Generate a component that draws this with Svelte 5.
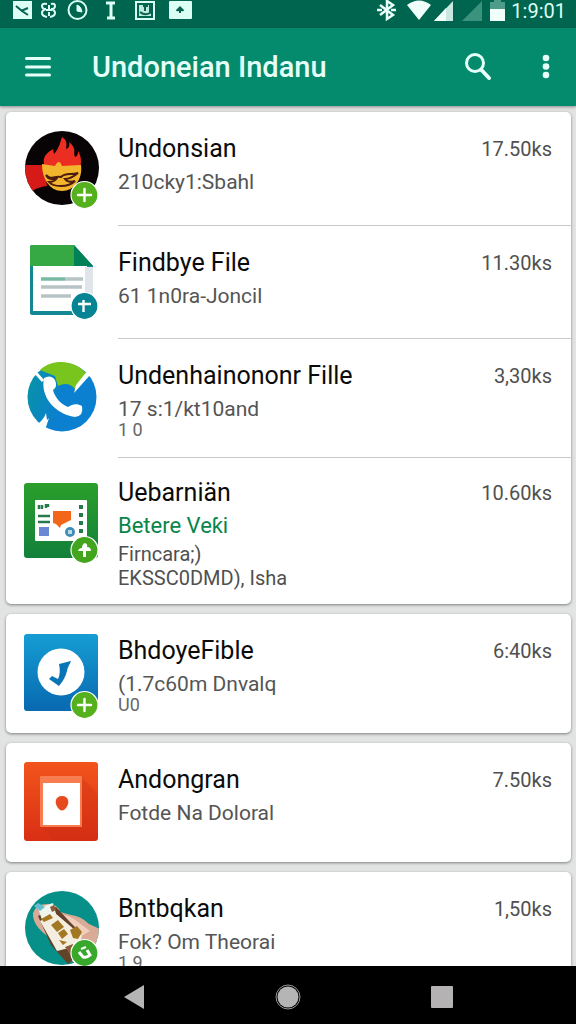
<script>
  const cards = [
    [
      { icon: 'flame', title: 'Undonsian', sub: '210cky1:Sbahl', size: '17.50ks' },
      { icon: 'doc', title: 'Findbye File', sub: '61 1n0ra-Joncil', size: '11.30ks' },
      { icon: 'phone', title: 'Undenhainononr Fille', sub: '17 s:1/kt10and', note: '1 0', size: '3,30ks' },
      { icon: 'board', title: 'Uebarniän', link: 'Betere Veƙi', lines: ['Firncara;)', 'EKSSC0DMD), Isha'], size: '10.60ks' }
    ],
    [{ icon: 'check', title: 'BhdoyeFible', sub: '(1.7c60m Dnvalq', note: 'U0', size: '6:40ks' }],
    [{ icon: 'frame', title: 'Andongran', sub: 'Fotde Na Doloral', size: '7.50ks' }],
    [{ icon: 'hand', title: 'Bntbqkan', sub: 'Fok? Om Theorai', note: '1 9', size: '1,50ks' }]
  ];
</script>

{#snippet badge(y, color, kind)}
  <circle cx="60.500" cy={y} r="13.500" fill={color} stroke="#fff" stroke-width="1.200" />
  {#if kind === 'plus'}
    <path d="M54 {y}h13M60.500 {y - 6}v12" stroke="#fff" stroke-width="2.400" stroke-linecap="round" />
  {:else if kind === 'cross'}
    <path d="M54 {y - 2}h13M59.500 {y - 6}v12" stroke="#fff" stroke-width="2.400" />
  {:else if kind === 'tree'}
    <path d="M54 {y + 1}q1-3 4-3q0-4 3-5q3 1 2 4q4 0 4 4h-5v6h-3v-6z" fill="#fff" />
  {:else}
    <path d="M55 {y - 1}l4 5q4 1 7-2l-3-5" fill="none" stroke="#fff" stroke-width="3" />
    <path d="M57 {y - 4}l5-2" stroke="#fff" stroke-width="2" />
  {/if}
{/snippet}

{#snippet appIcon(name)}
  <svg class="app-icon" viewBox="0 0 76 92" aria-hidden="true" fill="none">
    {#if name === 'flame'}
      <clipPath id="flame-clip"><circle cx="38" cy="40" r="37" /></clipPath>
      <g clip-path="url(#flame-clip)">
        <path d="M0 0h76v80H0z" fill="#080304" />
        <path d="M0 37h20l3 21q-10 1-18 7H0z" fill="#d61a18" />
        <path d="M20 37C18 27 25 24 29 21l1 5C36 19 36 14 38 9c5 3 5 7 4 12c3-1 4-4 3-7c8 6 4 10 6 15c3-1 3-4 3-6c5 8 2 13 3 18l-4 9H23z" fill="#ec2d22" />
        <path d="M18 36l13 2q4-8 7 0l19-1c2 14-7 26-19 26S18 51 18 36z" fill="#f3b52b" />
        <path d="M22 47c5 6 9 0 15 2c4-4 9-2 17-4c-6 5-9 6-13 6c3 4 7 3 10 2c-7 7-22 6-26 1c4 0 6-1 8-4c-5 2-9 1-11-3z" stroke="#4b1d10" stroke-width="2" />
      </g>
      {@render badge(67, '#55b01d', 'plus')}
    {:else if name === 'doc'}
      <path d="M8 4h42l19 21v46q0 3-3 3H8q-2 0-2-2V6q0-2 2-2z" fill="#118894" />
      <path d="M9 25h54v45H9z" fill="#fff" />
      <path d="M61 26h8v30h-8z" fill="#dfe5e9" />
      <path d="M8 4h42v21H6V6q0-2 2-2z" fill="#37a944" />
      <path d="M50 4l19 21H50z" fill="#008157" />
      <path d="M17 38h24" stroke="#78b9a3" stroke-width="3.500" />
      <path d="M41 38h18M17 46h41M17 55h30" stroke="#b8c3c6" stroke-width="3.500" />
      {@render badge(65, '#078493', 'cross')}
    {:else if name === 'phone'}
      <linearGradient id="phone-fill" x1="0" y1="0" x2="1" y2="0.300">
        <stop offset="0" stop-color="#0796a0" />
        <stop offset="0.600" stop-color="#0b7fd0" />
      </linearGradient>
      <circle cx="38" cy="43" r="34.500" fill="url(#phone-fill)" />
      <path d="M16 16C29 4 50 6 62 19L51 35q-7-8-17-3L31 22z" fill="#79c51d" />
      <path d="M11 18l8 9" stroke="#fff" stroke-width="3" />
      <path d="M64 16l3 4L50 39l2-8z" fill="#fff" />
      <path d="M20 24q7-4 11 2q3 7-2 10c2 8 8 14 15 17c4-3 9-4 14-1q2 10-7 11C31 60 16 43 20 24z" fill="#fff" />
      <path d="M14 70q6-5 8-11l1 7l2-2l-4 12z" fill="#fff" />
    {:else if name === 'board'}
      <linearGradient id="board-fill" x1="0" y1="0" x2="0" y2="1">
        <stop offset="0" stop-color="#2b9f2c" />
        <stop offset="1" stop-color="#13803a" />
      </linearGradient>
      <rect y="10" width="74" height="75" rx="3" fill="url(#board-fill)" />
      <rect x="11" y="27" width="52" height="41" rx="1" fill="#fff" />
      <path d="M15 32v4M18 32v4M22 31v4M24 31v3M14 43h12M14 49h12" stroke="#267b4c" stroke-width="2.500" />
      <path d="M57 32v32" stroke="#267b4c" stroke-width="4" stroke-dasharray="4 4" />
      <path d="M29 38h18v9l-10 5l-1 3l-4-4l-3-1z" fill="#f36519" />
      <path d="M15 54h10v9H15z" fill="#6888d3" />
      <circle cx="46" cy="59" r="5" fill="#3f8db5" />
      <path d="M44 57h4v4h-4z" fill="#b9dbe7" />
      {@render badge(77, '#43a51e', 'tree')}
    {:else if name === 'check'}
      <linearGradient id="check-fill" x1="0" y1="0" x2="0" y2="1">
        <stop offset="0" stop-color="#159dd2" />
        <stop offset="1" stop-color="#0869b1" />
      </linearGradient>
      <rect y="4" width="74" height="77" rx="3" fill="url(#check-fill)" />
      <circle cx="37" cy="42" r="23.500" fill="#fff" />
      <path d="M35 34l12-3c-1 3-3 5-4 10q-2 8-8 15l-10-7l3-3l6 3q3-6 1-15z" fill="#0875b7" />
      {@render badge(75, '#55b01d', 'plus')}
    {:else if name === 'frame'}
      <linearGradient id="frame-fill" x1="0" y1="0" x2="0" y2="1">
        <stop offset="0" stop-color="#f2541b" />
        <stop offset="1" stop-color="#d92f15" />
      </linearGradient>
      <rect y="3" width="74" height="79" rx="3" fill="url(#frame-fill)" />
      <path d="M57 18l17 17v44l-3 3H29L17 67z" fill="#c92e12" opacity="0.300" />
      <rect x="16" y="17" width="42" height="51" rx="1" fill="#f77c50" />
      <path d="M19 24h37v42H19z" fill="#fff" />
      <path d="M38 37c7 0 8 7 4 12q-4 5-8 0c-4-5-3-12 4-12z" fill="#e74a1e" />
    {:else}
      <clipPath id="hand-clip"><circle cx="38" cy="40" r="37" /></clipPath>
      <g clip-path="url(#hand-clip)">
        <path d="M0 0h76v80H0z" fill="#07908a" />
        <path d="M9 25q3-9 14-9q11 0 13 8l11 3q10 1 18 9l11 5v34H51Q34 67 26 50Q8 38 9 25z" fill="#d9aa96" />
        <path d="M36 27q9-1 18 7l12 9l-10 6z" fill="#efcebb" />
        <path d="M14 28l18-9l13 14l11 11l2 20l-14 12l-17-19z" fill="#604328" />
        <path d="M14 20l15-5l3 11l-14 6z" fill="#eef4ee" />
        <path d="M10 18l4-3l7 4l-5 4z" fill="#62bfd0" />
        <path d="M16 33l15-8l27 23l-4 12l-13 1l-8 2z" fill="#f3eee0" />
        <path d="M27 37l7-5l6 7l-7 5zM34 45l6-4l4 5l-6 5zM17 31l9-5l3 4l-9 4zM46 42l7-4l5 6l-4 7l-5-1zM35 52l4 5l4-3z" fill="#a37823" />
        <path d="M26 19l4-2l2 5l-4 2zM41 59l8-3l7 6l-7 9z" fill="#8a5d36" />
      </g>
      {@render badge(65, '#37a82b', 'leaf')}
    {/if}
  </svg>
{/snippet}

<div class="screen">
  <div class="status-bar">
    <svg width="192" height="28" viewBox="0 0 192 28" fill="none" stroke="#dcfff5" aria-hidden="true">
      <path d="M13 1h19v18H13z" fill="#dcfff5" stroke="none" />
      <path d="M16 6l6 5l6 4M21 11l7-3" stroke="#07624f" stroke-width="2" />
      <path d="M47 4q-5-1-5 2t4 3q-4 1-4 4t5 4M51 4q4-1 4 2t-4 3q4 1 4 4t-5 4M46 10h6M49 5v4M49 12v4" stroke-width="2" />
      <circle cx="77.500" cy="10" r="9" stroke-width="2" />
      <path d="M77 5v6l5 1q-1-6-5-7z" fill="#dcfff5" />
      <path d="M106 3h9M111 3v14M107 18h8" stroke-width="3" />
      <path d="M136 2h18v17h-18z" stroke-width="2" />
      <path d="M139 5h12v11h-12z" fill="#bde9de" stroke="none" />
      <path d="M140 12q5 4 10 1V5M143 6h5M145 6v5" stroke="#07624f" stroke-width="2" />
      <rect x="169" y="1" width="23" height="18" rx="1" fill="#dcfff5" stroke="none" />
      <path d="M180 6l4 4q0 2-3 1v2h-2v-2q-3 1-3-1z" fill="#07624f" stroke="none" />
    </svg>
    <div class="status-right">
      <svg width="128" height="28" viewBox="0 0 128 28" fill="none" aria-hidden="true">
        <path d="M5 5l13 10l-6 4V1l6 4L5 15M2 10h5M16 10h5" stroke="#eafff9" stroke-width="2.500" />
        <path d="M32 5q12-9 24 0L44 20z" fill="#f1fffb" />
        <path d="M78 1v20H59z" fill="#c9e8df" />
        <path d="M71 8v13H59z" fill="#f1fffb" />
        <path d="M107 1v20H87z" fill="#3b927d" />
        <path d="M119 0h7v2h4v8h-15V2h4z" fill="#4d9b89" />
        <path d="M115 9h15v12h-15z" fill="#f1fffb" />
      </svg>
      <span class="time">1:9:01</span>
    </div>
  </div>

  <header class="app-bar">
    <button class="menu" aria-label="Menu">
      <svg width="26" height="22" viewBox="0 0 26 22" stroke="#e6fff8" stroke-width="3" stroke-linecap="round">
        <path d="M1.500 2.500h23M1.500 11h23M1.500 19h23" />
      </svg>
    </button>
    <h1>Undoneian Indanu</h1>
    <button aria-label="Search">
      <svg width="28" height="28" viewBox="0 0 28 28" fill="none" stroke="#e6fff8" stroke-linecap="round">
        <circle cx="11" cy="10" r="8.500" stroke-width="3" />
        <path d="M17.500 17l7.500 8" stroke-width="4" />
      </svg>
    </button>
    <button class="more" aria-label="More options">
      <svg width="8" height="26" viewBox="0 0 8 26" fill="#e6fff8">
        <circle cx="4" cy="4" r="3.300" />
        <circle cx="4" cy="12.500" r="3.300" />
        <circle cx="4" cy="21" r="3.300" />
      </svg>
    </button>
  </header>

  <main>
    {#each cards as card}
      <section class="card" class:single={card.length === 1}>
        {#each card as item}
          <article class="item" class:tall={item.lines}>
            {@render appIcon(item.icon)}
            <div class="body">
              <div class="text">
                <h2>{item.title}</h2>
                {#if item.sub}<p class="sub">{item.sub}</p>{/if}
                {#if item.link}<a class="sub" href="#details">{item.link}</a>{/if}
                {#if item.note}<p class="note">{item.note}</p>{/if}
                {#if item.lines}
                  <div class="lines">
                    {#each item.lines as line}<p>{line}</p>{/each}
                  </div>
                {/if}
              </div>
              <span class="size">{item.size}</span>
            </div>
          </article>
        {/each}
      </section>
    {/each}
  </main>

  <nav>
    <button aria-label="Back">
      <svg width="22" height="26" viewBox="0 0 22 26"><path d="M1 13L21 1v24z" fill="#b5b5b5" /></svg>
    </button>
    <button aria-label="Home">
      <svg width="26" height="26" viewBox="0 0 26 26">
        <circle cx="13" cy="13" r="12" fill="none" stroke="#999" />
        <circle cx="13" cy="13" r="10.500" fill="#b5b5b5" />
      </svg>
    </button>
    <button aria-label="Recent apps">
      <svg width="22" height="22" viewBox="0 0 22 22"><rect width="22" height="22" rx="1" fill="#b5b2b3" /></svg>
    </button>
  </nav>
</div>

<style>
  :global(body) {
    margin: 0;
    background: #e2e4e4;
  }
  .screen {
    display: flex;
    flex-direction: column;
    height: 100vh;
    font-family: Roboto, sans-serif;
  }
  h1, h2, p {
    margin: 0;
  }
  button {
    display: flex;
    align-items: center;
    justify-content: center;
    padding: 0;
    border: 0;
    background: none;
    cursor: pointer;
  }
  .status-bar {
    display: flex;
    flex: none;
    justify-content: space-between;
    height: 28px;
    background: #00654f;
  }
  .status-right {
    display: flex;
    gap: 8px;
    padding-right: 10px;
  }
  .status-right svg {
    overflow: visible;
  }
  .time {
    color: #dcfff5;
    font-size: 20px;
    line-height: 22px;
  }
  .app-bar {
    display: flex;
    flex: none;
    align-items: center;
    height: 78px;
    background: #048b6e;
    box-shadow: 0 1px 3px rgba(0, 0, 0, 0.4);
    z-index: 1;
  }
  .app-bar button {
    width: 60px;
    height: 48px;
  }
  .app-bar .menu {
    width: 76px;
    margin-right: 16px;
  }
  .app-bar .more {
    margin-left: 8px;
  }
  h1 {
    flex: 1;
    color: #e6fff8;
    font-size: 29px;
    font-weight: 500;
    line-height: 32px;
  }
  main {
    display: flex;
    flex: 1;
    flex-direction: column;
    gap: 10px;
    min-height: 0;
    padding: 6px 5px 0 6px;
    overflow-y: auto;
    scrollbar-width: none;
  }
  .card {
    flex: none;
    border-radius: 5px;
    background: #fff;
    box-shadow: 0 1px 3px rgba(0, 0, 0, 0.45);
  }
  .item {
    display: flex;
    gap: 18px;
    padding-left: 18px;
  }
  .app-icon {
    flex: none;
    width: 76px;
    height: 92px;
    margin-top: 16px;
  }
  .body {
    display: flex;
    flex: 1;
    justify-content: space-between;
    box-sizing: border-box;
    min-height: 113px;
    padding: 17px 19px 19px 0;
  }
  .single .body {
    min-height: 119px;
  }
  .tall .body {
    padding: 15px 19px 14px 0;
  }
  .item + .item .body {
    border-top: 1px solid #c8caca;
  }
  h2 {
    color: #0b0b0b;
    font-size: 25px;
    font-weight: 400;
    line-height: 40px;
  }
  .sub {
    display: block;
    color: #555;
    font-size: 21px;
    line-height: 26px;
  }
  a.sub {
    color: #07854a;
    font-size: 22px;
    text-decoration: none;
  }
  .note {
    color: #666;
    font-size: 18px;
    line-height: 16px;
  }
  .lines {
    margin-top: 3px;
    color: #505050;
    font-size: 20px;
    line-height: 24px;
  }
  .size {
    color: #505050;
    font-size: 20px;
    line-height: 40px;
  }
  nav {
    display: grid;
    flex: none;
    grid-template-columns: repeat(3, 154px);
    justify-content: center;
    height: 58px;
    padding-top: 4px;
    box-sizing: border-box;
    background: #000;
  }
</style>
